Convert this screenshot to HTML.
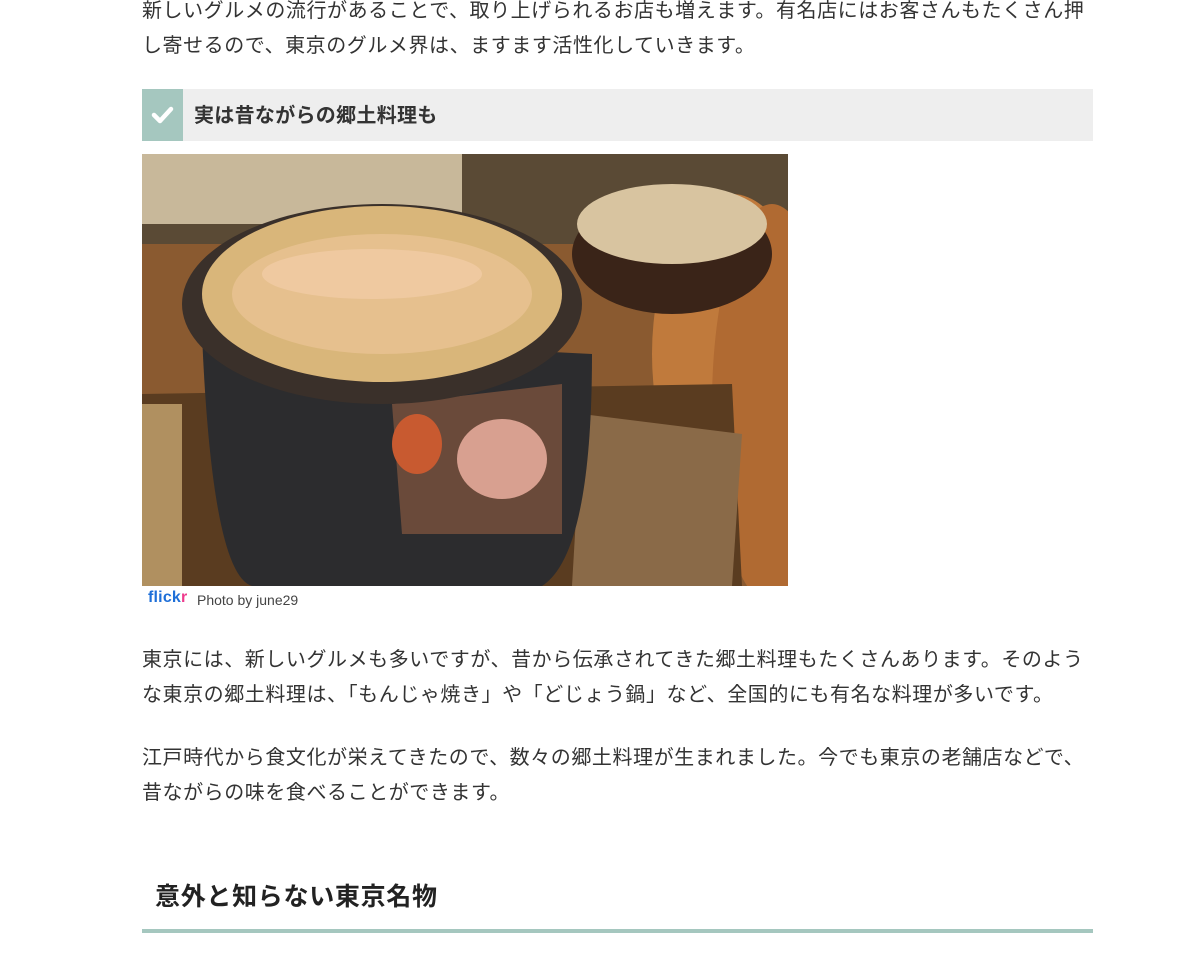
<!DOCTYPE html>
<html><head><meta charset="utf-8"><style>
body{margin:0;width:1200px;height:958px;overflow:hidden;background:#fff;font-family:"Liberation Sans","Noto Sans CJK JP",sans-serif;color:#333;position:relative}
.t{position:absolute;left:142px;font-size:20px;line-height:35px;white-space:nowrap;letter-spacing:0.56px}
.h3{position:absolute;left:142px;top:89px;width:951px;height:52px;background:#eeeeee}
.h3 .ic{position:absolute;left:0;top:0;width:41px;height:52px;background:#a5c7bf}
.h3 .tx{position:absolute;left:52px;top:1px;line-height:52px;font-size:20px;font-weight:bold;color:#333;letter-spacing:0.3px}
.img{position:absolute;left:142px;top:154px;width:646px;height:432px;overflow:hidden}
</style></head><body>
<div class="t" style="top:-6px">新しいグルメの流行があることで、取り上げられるお店も増えます。有名店にはお客さんもたくさん押</div>
<div class="t" style="top:29px">し寄せるので、東京のグルメ界は、ますます活性化していきます。</div>
<div class="h3"><div class="ic"><svg width="41" height="52" viewBox="0 0 41 52"><path d="M12 26l6 6 11-12" stroke="#fff" stroke-width="4.5" fill="none" stroke-linecap="round" stroke-linejoin="round"/></svg></div><div class="tx">実は昔ながらの郷土料理も</div></div>
<div class="img"><svg width="646" height="432" viewBox="0 0 646 432">
<rect width="646" height="432" fill="#8a5a30"/>
<rect x="0" y="0" width="646" height="90" fill="#5a4a35"/>
<rect x="0" y="0" width="320" height="70" fill="#c8b89a"/>
<ellipse cx="590" cy="200" rx="80" ry="160" fill="#c07a3c"/>
<ellipse cx="630" cy="250" rx="60" ry="200" fill="#b06a32"/>
<ellipse cx="530" cy="100" rx="100" ry="60" fill="#3a2418"/>
<ellipse cx="530" cy="70" rx="95" ry="40" fill="#d8c4a0"/>
<polygon points="0,240 590,230 600,432 0,432" fill="#5a3c20"/>
<polygon points="440,260 600,280 590,432 430,432" fill="#8a6a48"/>
<rect x="0" y="250" width="40" height="182" fill="#b09060"/>
<path d="M60 180 Q70 420 110 432 L400 432 Q450 400 450 200 Z" fill="#2c2c2e"/>
<path d="M250 250 L420 230 L420 380 L260 380 Z" fill="#6a4a3a"/>
<ellipse cx="360" cy="305" rx="45" ry="40" fill="#d8a090"/>
<ellipse cx="275" cy="290" rx="25" ry="30" fill="#c85a30"/>
<ellipse cx="240" cy="150" rx="200" ry="100" fill="#3a302a"/>
<ellipse cx="240" cy="140" rx="180" ry="88" fill="#d9b67a"/>
<ellipse cx="240" cy="140" rx="150" ry="60" fill="#e6c08e"/>
<ellipse cx="230" cy="120" rx="110" ry="25" fill="#efc9a0"/>
</svg></div>
<div style="position:absolute;left:148px;top:589px;font-size:16px;font-weight:bold;color:#1e6fd8;letter-spacing:0.2px">flick<span style="color:#ee3a8c">r</span></div>
<div style="position:absolute;left:197px;top:592px;font-size:14px;color:#444">Photo by june29</div>
<div class="t" style="top:643px">東京には、新しいグルメも多いですが、昔から伝承されてきた郷土料理もたくさんあります。そのよう</div>
<div class="t" style="top:678px">な東京の郷土料理は、「もんじゃ焼き」や「どじょう鍋」など、全国的にも有名な料理が多いです。</div>
<div class="t" style="top:741px">江戸時代から食文化が栄えてきたので、数々の郷土料理が生まれました。今でも東京の老舗店などで、</div>
<div class="t" style="top:776px">昔ながらの味を食べることができます。</div>
<div style="position:absolute;left:155px;top:879px;font-size:25px;font-weight:bold;color:#222;line-height:36px;letter-spacing:0.7px">意外と知らない東京名物</div>
<div style="position:absolute;left:142px;top:929px;width:951px;height:4px;background:#a5c7bf"></div>
</body></html>
